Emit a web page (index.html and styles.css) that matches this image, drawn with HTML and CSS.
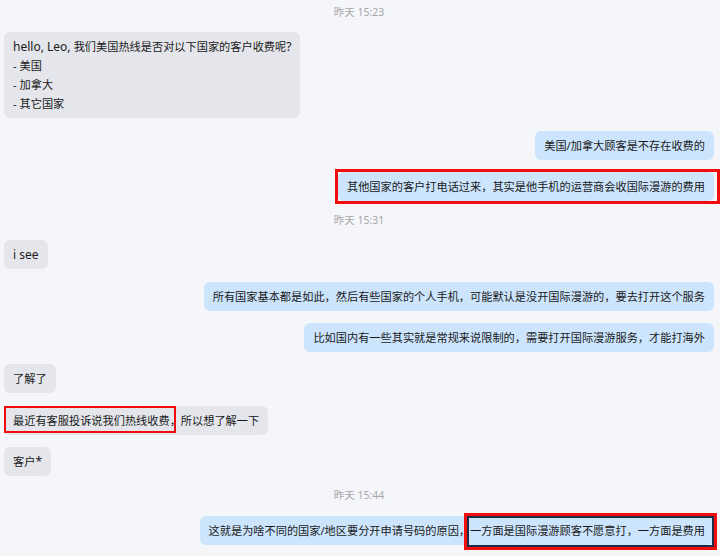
FILE: index.html
```html
<!DOCTYPE html>
<html lang="zh-CN">
<head>
  <meta charset="UTF-8">
  <title>聊天记录</title>
  <link rel="stylesheet" href="styles.css">
</head>
<body>

  <div class="chat">
    <div class="time">昨天 15:23</div>

    <div class="row in">
      <div class="bubble"><span class="en">hello, Leo, </span>我们美国热线是否对以下国家的客户收费呢<span class="en">?</span><br>- 美国<br>- 加拿大<br>- 其它国家</div>
    </div>
    <div class="row out">
      <div class="bubble">美国/加拿大顾客是不存在收费的</div>
    </div>
    <div class="row out">
      <div class="bubble boxed">其他国家的客户打电话过来，其实是他手机的运营商会收国际漫游的费用</div>
    </div>

    <div class="time">昨天 15:31</div>

    <div class="row in">
      <div class="bubble"><span class="en">i see</span></div>
    </div>
    <div class="row out">
      <div class="bubble">所有国家基本都是如此，然后有些国家的个人手机，可能默认是没开国际漫游的，要去打开这个服务</div>
    </div>
    <div class="row out">
      <div class="bubble">比如国内有一些其实就是常规来说限制的，需要打开国际漫游服务，才能打海外</div>
    </div>
    <div class="row in">
      <div class="bubble">了解了</div>
    </div>
    <div class="row in">
      <div class="bubble"><span class="mark mark-sm">最近有客服投诉说我们热线收费</span>，所以想了解一下</div>
    </div>
    <div class="row in">
      <div class="bubble">客户<span class="en">*</span></div>
    </div>

    <div class="time">昨天 15:44</div>

    <div class="row out">
      <div class="bubble">这就是为啥不同的国家/地区要分开申请号码的原因，<span class="mark mark-lg">一方面是国际漫游顾客不愿意打，一方面是费用</span></div>
    </div>
  </div>

</body>
</html>
```

FILE: styles.css
```css
html, body { margin: 0; }
body {
  font-family: "Noto Sans", "Noto Sans CJK SC", sans-serif;
  background-color: #f5f6fa;
  color: #1a1a1a;
  width: 720px;
  height: 556px;
  overflow: hidden;
}
.chat {
  display: flex; flex-direction: column; gap: 12.3px;
  padding: 5px 6px 0 4px;
}
.time {
  text-align: center; font-size: 10.5px; line-height: 15px; color: #a8a8a8;
}
.row { display: flex; }
.row.out { justify-content: flex-end; }
.bubble {
  font-size: 11.2px; line-height: 19px;
  padding: 5px 9px; border-radius: 6px;
  background-color: #e4e6eb;
  white-space: nowrap;
}
.bubble .en { font-size: 12px; }
.row.out .bubble { background-color: #cce5fd; }

/* red annotation boxes drawn on top of the screenshot */
.boxed { position: relative; }
.boxed::after {
  content: ""; position: absolute;
  top: -3px; bottom: -3px; left: -3px; right: -6px;
  border: 3px solid #f20c0c;
}
.mark { display: inline-block; position: relative; }
.mark::after { content: ""; position: absolute; }
.mark-sm::after {
  top: -5px; bottom: -3px; left: -9px; right: -6px;
  border: 2px solid #f20c0c;
}
.mark-lg::after {
  top: -8px; bottom: -10px; left: -6px; right: -12px;
  border: 3px solid #f20c0c;
  box-shadow: inset 0 0 0 2px #1d2c48;
}
```
